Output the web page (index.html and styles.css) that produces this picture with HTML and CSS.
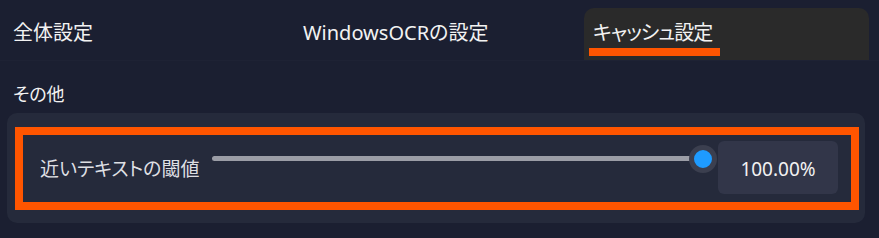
FILE: index.html
```html
<!DOCTYPE html>
<html lang="ja">

<head>
    <meta charset="UTF-8">
    <meta name="viewport" content="width=device-width, initial-scale=1.0">
    <title>キャッシュ設定</title>
    <link rel="stylesheet" href="styles.css">
</head>

<body>
    <!-- Tabs -->
    <div class="tabs">
        <div class="tab">全体設定</div>
        <div class="tab">WindowsOCRの設定</div>
        <div class="tab active">
            <span>キャッシュ設定</span>
            <div class="indicator"></div>
        </div>
    </div>

    <!-- Cache settings -->
    <div class="content">
        <div class="section-title">その他</div>
        <div class="card">
            <div class="setting-row">
                <span class="setting-label">近いテキストの閾値</span>
                <div class="slider">
                    <div class="track"></div>
                    <div class="thumb"></div>
                </div>
                <div class="value-box">100.00%</div>
            </div>
        </div>
    </div>
</body>

</html>
```

FILE: styles.css
```css
body {
    font-family: "Noto Sans", "Noto Sans CJK JP", sans-serif;
    font-feature-settings: "palt";
    background-color: #1b1f31;
    color: #f2f2f2;
    margin: 0;
}

.tabs {
    display: flex;
    gap: 5px;
    padding: 8px 10px 0 4px;
    height: 52px;
    border-bottom: 1px solid #1e2234;
}

.tab {
    flex: 1;
    display: flex;
    flex-direction: column;
    padding: 12px 0 0 9px;
    font-size: 20px;
    line-height: 26px;
    border-radius: 10px 10px 0 0;
}

.tab.active {
    background: #2a2a2a;
    letter-spacing: -1px;
}

.indicator {
    width: 131px;
    height: 8px;
    margin: 2px 0 0 -4px;
    background: #ff5500;
}

.content {
    padding: 0 14px 0 7px;
}

.section-title {
    font-size: 18px;
    line-height: 24px;
    padding: 21px 0 0 6px;
    margin-bottom: 7px;
}

.card {
    background: #252a3b;
    border-radius: 10px;
    padding: 14px 6px 13px 8px;
}

.setting-row {
    display: flex;
    align-items: center;
    border: 8px solid #ff5500;
    padding: 6px 13px 8px 17px;
}

.setting-label {
    font-size: 19px;
    color: #dedfe3;
    margin-right: 13px;
}

.slider {
    flex: 1;
    position: relative;
    height: 28px;
    align-self: flex-start;
    margin: 4px 1px 0 0;
}

.track {
    position: absolute;
    left: 0;
    right: 2px;
    top: 11px;
    height: 5px;
    border-radius: 3px;
    background: #9b9da6;
}

.thumb {
    position: absolute;
    right: 0;
    top: 0;
    width: 18px;
    height: 18px;
    border-radius: 50%;
    background: #1e9bff;
    border: 5px solid #3b3f4f;
}

.value-box {
    width: 120px;
    height: 53px;
    box-sizing: border-box;
    display: flex;
    align-items: center;
    justify-content: center;
    background: #323649;
    border-radius: 6px;
    font-size: 19px;
    padding-top: 2px;
}
```
